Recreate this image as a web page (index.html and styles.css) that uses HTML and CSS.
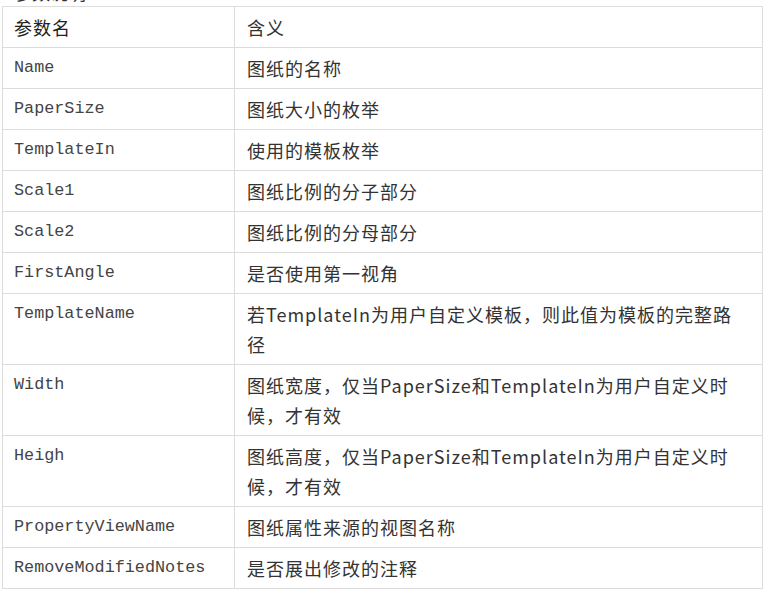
FILE: index.html
```html
<!DOCTYPE html>
<html lang="zh">
<head>
<meta charset="utf-8">
<link rel="stylesheet" href="styles.css">
</head>
<body>
<p class="intro">参数说明：</p>
<table class="params">
  <tr><td class="name head">参数名</td><td class="desc">含义</td></tr>
  <tr><td class="name">Name</td><td class="desc">图纸的名称</td></tr>
  <tr><td class="name">PaperSize</td><td class="desc">图纸大小的枚举</td></tr>
  <tr><td class="name">TemplateIn</td><td class="desc">使用的模板枚举</td></tr>
  <tr><td class="name">Scale1</td><td class="desc">图纸比例的分子部分</td></tr>
  <tr><td class="name">Scale2</td><td class="desc">图纸比例的分母部分</td></tr>
  <tr><td class="name">FirstAngle</td><td class="desc">是否使用第一视角</td></tr>
  <tr><td class="name">TemplateName</td><td class="desc">若TemplateIn为用户自定义模板，则此值为模板的完整路径</td></tr>
  <tr><td class="name">Width</td><td class="desc">图纸宽度，仅当PaperSize和TemplateIn为用户自定义时候，才有效</td></tr>
  <tr><td class="name">Heigh</td><td class="desc">图纸高度，仅当PaperSize和TemplateIn为用户自定义时候，才有效</td></tr>
  <tr><td class="name">PropertyViewName</td><td class="desc">图纸属性来源的视图名称</td></tr>
  <tr><td class="name">RemoveModifiedNotes</td><td class="desc">是否展出修改的注释</td></tr>
</table>
</body>
</html>
```
FILE: styles.css
```css
html, body {
  margin: 0;
  padding: 0;
  background: #fff;
}
body {
  color: #333;
  font-family: "Noto Sans CJK SC", "Noto Sans", sans-serif;
}
.intro {
  margin: -22px 0 0 14px;
  height: 28px;
  font-size: 18px;
  line-height: 28px;
  overflow: hidden;
}
.params {
  border-collapse: collapse;
  margin-left: 2px;
  width: 761px;
  table-layout: fixed;
}
.params td {
  border: 1px solid #dcdcdc;
  padding: 5px 12px;
  line-height: 30px;
  vertical-align: top;
}
.name {
  width: 232px;
  font-family: "Liberation Mono", "DejaVu Sans Mono", monospace;
  font-size: 16.8px;
  color: #444;
  padding-left: 11px !important;
  box-sizing: border-box;
}
.name.head {
  font-family: "Noto Sans CJK SC", "Noto Sans", sans-serif;
  font-size: 18px;
  letter-spacing: 1px;
  color: #222;
}
.desc {
  font-size: 18px;
  letter-spacing: 1px;
  color: #333;
}
```
